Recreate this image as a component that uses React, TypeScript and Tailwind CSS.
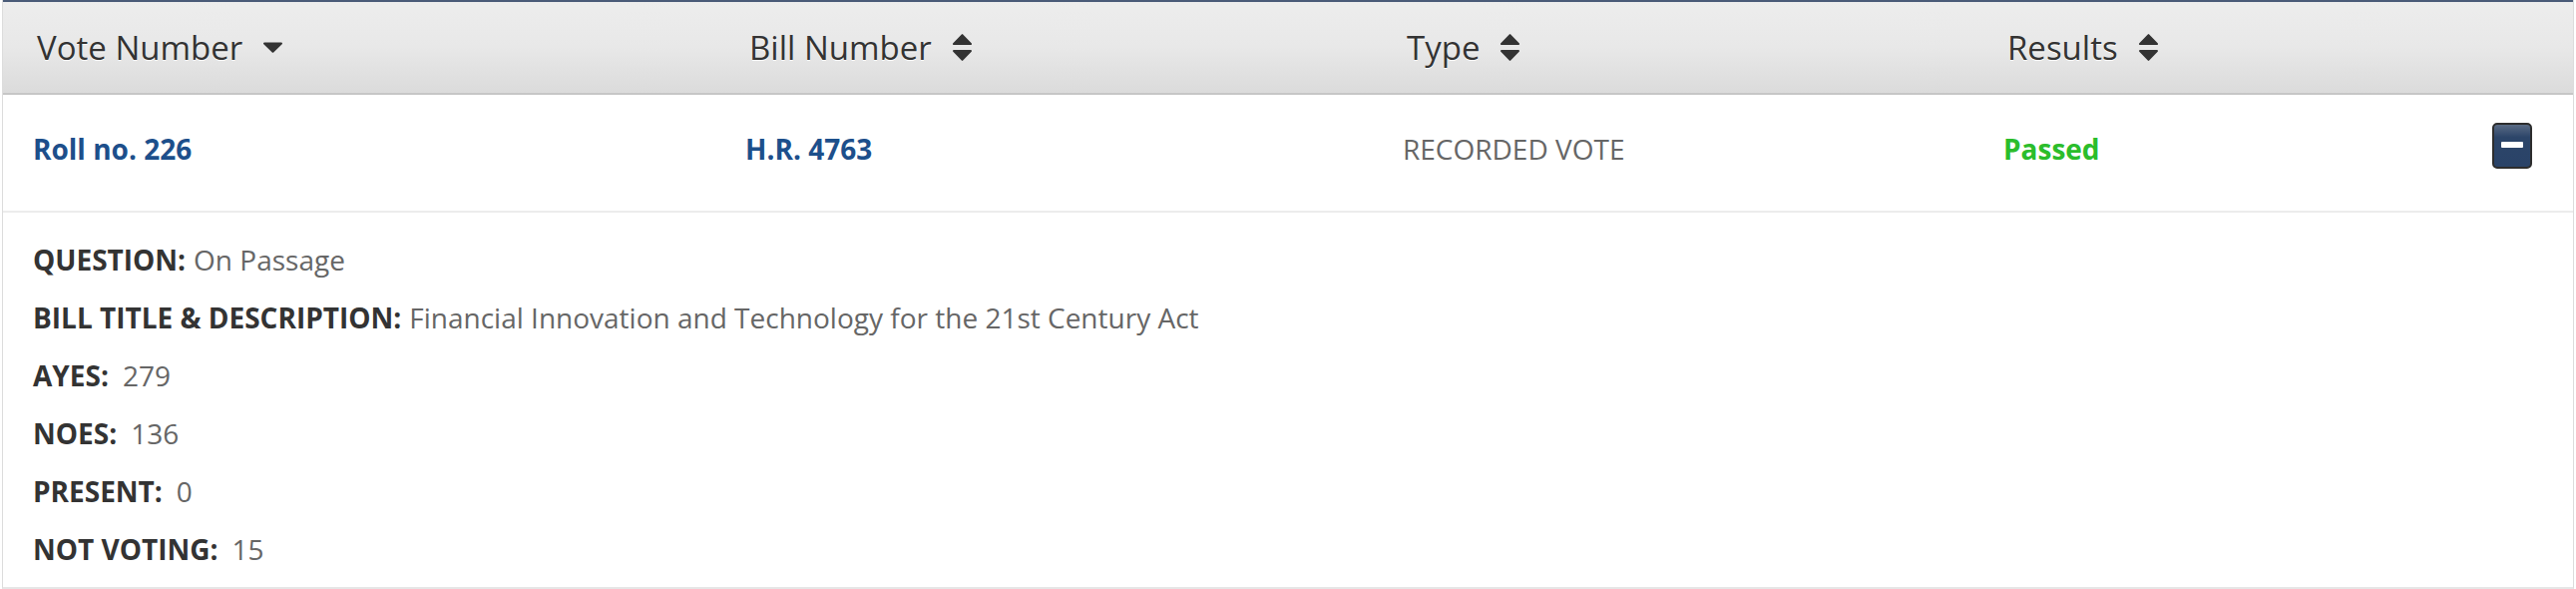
import React from "react";

// Sort glyphs drawn inline (caret for the active column, up/down pair for the others)
function CaretDown() {
  return (
    <svg width="19" height="11" viewBox="0 0 19 11" className="shrink-0">
      <path d="M1 0.5 H18 a1 1 0 0 1 0.7 1.7 L10.2 10.4 a1 1 0 0 1 -1.4 0 L0.3 2.2 A1 1 0 0 1 1 0.5 Z" fill="#333" />
    </svg>
  );
}

function SortBoth() {
  return (
    <svg width="19" height="27" viewBox="0 0 19 27" className="shrink-0">
      <path d="M8.8 0.4 a1 1 0 0 1 1.4 0 L18.7 9.3 a1 1 0 0 1 -0.7 1.7 H1 a1 1 0 0 1 -0.7 -1.7 Z" fill="#333" />
      <path d="M1 16 H18 a1 1 0 0 1 0.7 1.7 L10.2 26.6 a1 1 0 0 1 -1.4 0 L0.3 17.7 A1 1 0 0 1 1 16 Z" fill="#333" />
    </svg>
  );
}

const COLS = "grid grid-cols-[714px_659px_602px_1fr]";

const details: { label: string; value: string; wide?: boolean }[] = [
  { label: "QUESTION:", value: "On Passage" },
  { label: "BILL TITLE & DESCRIPTION:", value: "Financial Innovation and Technology for the 21st Century Act" },
  { label: "AYES:", value: "279", wide: true },
  { label: "NOES:", value: "136", wide: true },
  { label: "PRESENT:", value: "0", wide: true },
  { label: "NOT VOTING:", value: "15", wide: true },
];

function HeaderCell({ label, active }: { label: string; active?: boolean }) {
  return (
    <div className="flex items-center gap-[21px] pl-[34px] h-full">
      <span className="text-[33px] leading-none text-[#333] [text-shadow:0_1px_0_#fff]">{label}</span>
      {active ? <CaretDown /> : <SortBoth />}
    </div>
  );
}

export default function App() {
  return (
    <div className="w-[2582px] h-[590px] bg-white px-[2px] font-['Open_Sans',sans-serif]">
      <div className="h-full border-x border-b-2 border-x-[#dcdcdc] border-b-[#e6e6e6] flex flex-col">
        {/* header */}
        <div
          className={`${COLS} h-[95px] border-t-2 border-t-[#4a5b78] border-b-2 border-b-[#c6c6c6] bg-gradient-to-b from-[#ededed] via-[#e8e8e8] to-[#dbdbdb]`}
        >
          <HeaderCell label="Vote Number" active />
          <HeaderCell label="Bill Number" />
          <HeaderCell label="Type" />
          <HeaderCell label="Results" />
        </div>

        {/* vote row */}
        <div className={`${COLS} h-[118px] pb-[8px] items-center border-b-2 border-b-[#ececec] text-[28px]`}>
          <a className="pl-[30px] font-bold text-[#1d4f8b]">Roll no. 226</a>
          <a className="pl-[30px] font-bold text-[#1d4f8b]">H.R. 4763</a>
          <div className="pl-[30px] text-[#666]">RECORDED VOTE</div>
          <div className="pl-[30px] pr-[41px] flex items-center justify-between">
            <span className="font-bold text-[#2bbd2b]">Passed</span>
            <button className="w-[40px] h-[46px] -mt-[6px] rounded-[5px] border-2 border-[#2d2d2d] bg-gradient-to-b from-[#5a6b84] via-[#2c4569] via-30% to-[#2a4368] flex items-center justify-center">
              <span className="block w-[22px] h-[6px] -mt-[2px] rounded-[1px] bg-white" />
            </button>
          </div>
        </div>

        {/* expanded details */}
        <div className="flex flex-col gap-[20px] pt-[28px] pl-[30px] text-[28px] leading-[38px]">
          {details.map((d) => (
            <p key={d.label}>
              <span className="font-bold text-[#333]">{d.label}</span>
              <span className={`text-[#666] ${d.wide ? "ml-[14px]" : "ml-[8px]"}`}>{d.value}</span>
            </p>
          ))}
        </div>
      </div>
    </div>
  );
}
